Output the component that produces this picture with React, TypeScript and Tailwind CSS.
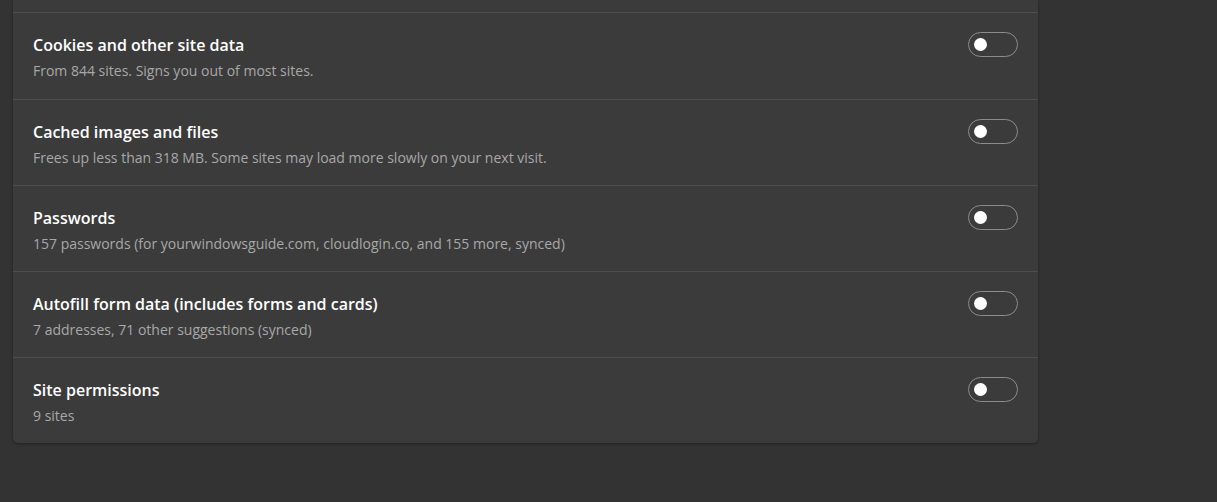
import React from "react";

type Row = { title: string; desc: string };

const rows: Row[] = [
  { title: "Cookies and other site data", desc: "From 844 sites. Signs you out of most sites." },
  { title: "Cached images and files", desc: "Frees up less than 318 MB. Some sites may load more slowly on your next visit." },
  { title: "Passwords", desc: "157 passwords (for yourwindowsguide.com, cloudlogin.co, and 155 more, synced)" },
  { title: "Autofill form data (includes forms and cards)", desc: "7 addresses, 71 other suggestions (synced)" },
  { title: "Site permissions", desc: "9 sites" },
];

function Toggle() {
  return (
    <button
      type="button"
      className="-mt-[1px] flex h-[25px] w-[50px] shrink-0 items-center rounded-full border border-[#8c8c8c] px-[5px]"
    >
      <span className="block h-[13px] w-[13px] rounded-full bg-white" />
    </button>
  );
}

export default function App() {
  return (
    <div
      className="min-h-[502px] w-full overflow-hidden bg-[#333333] pl-[13px]"
      style={{ fontFamily: '"Open Sans", "Noto Sans", sans-serif' }}
    >
      <div className="w-[1025px] rounded-b-[5px] bg-[#3b3b3b] shadow-[0_1px_3px_rgba(0,0,0,0.35)]">
        {/* tail of the row above, scrolled out of view */}
        <div className="h-[12px]" />
        {rows.map((r, i) => (
          <div
            key={r.title}
            className={
              "flex items-start justify-between border-t border-[#4d4d4d] px-[20px] pt-[20px] " +
              (i === 0 ? "h-[87px]" : "h-[86px]")
            }
          >
            <div className="flex flex-col">
              <div className="text-[16px] font-semibold leading-[24px] text-white">{r.title}</div>
              <div className="mt-[4px] text-[14px] leading-[20px] text-[#a8a8a8]">{r.desc}</div>
            </div>
            <Toggle />
          </div>
        ))}
      </div>
    </div>
  );
}
